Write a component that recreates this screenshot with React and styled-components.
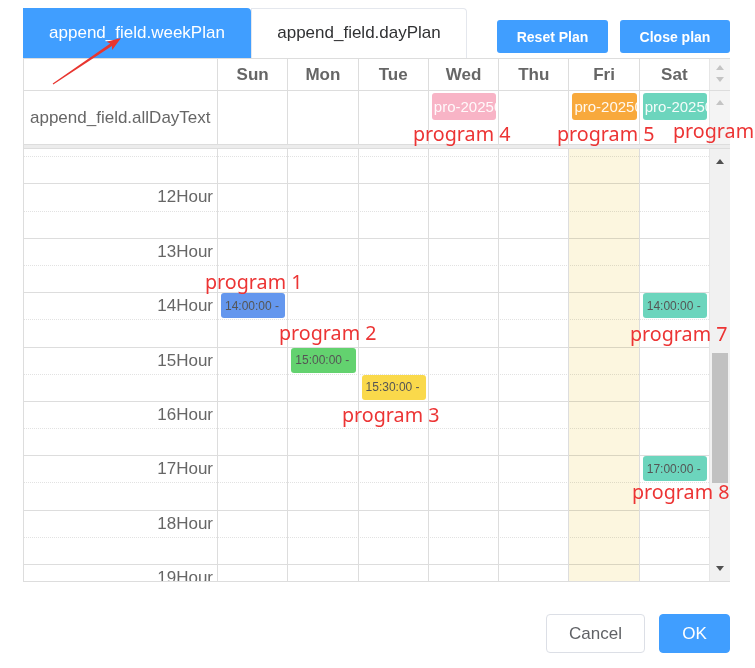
import React from 'react'
import styled, { createGlobalStyle } from 'styled-components';

const GlobalStyle = createGlobalStyle`
    body {
        margin: 0;
        background: #fff;
        font-family: "Liberation Sans", Arial, sans-serif;
    }
`

const SLOT = 27.2;
const START_HOUR = 11;
const SCROLL_OFFSET = 20;

const Page = styled.div`
    position: relative;
    width: 755px;
    height: 668px;
    overflow: hidden;
    box-sizing: border-box;
    padding: 8px 25px 0 23px;
    display: flex;
    flex-direction: column;
`

const TopBar = styled.div`
    display: flex;
    justify-content: space-between;
    height: 50px;
`

const Tabs = styled.div`
    display: flex;
`

const Tab = styled.div`
    height: 50px;
    width: ${p => p.$active ? 228 : 216}px;
    box-sizing: border-box;
    display: flex;
    align-items: center;
    justify-content: center;
    padding-bottom: 1px;
    font-size: 17px;
    color: ${p => p.$active ? '#fff' : '#303133'};
    background: ${p => p.$active ? '#409eff' : '#fff'};
    border: ${p => p.$active ? 'none' : '1px solid #e4e7ed'};
    border-bottom: none;
    border-radius: 0 4px 0 0;
`

const Actions = styled.div`
    display: flex;
    gap: 12px;
    padding-top: 12px;
`

const PlanButton = styled.button`
    width: ${p => p.$w}px;
    height: 33px;
    border: none;
    border-radius: 3px;
    background: #409eff;
    color: #fff;
    font-family: inherit;
    font-weight: bold;
    font-size: 14px;
    padding: 0;
`

const Calendar = styled.div`
    width: 707px;
    height: 524px;
    box-sizing: border-box;
    border: 1px solid #ddd;
    border-right: none;
    display: flex;
    flex-direction: column;
`

const Row = styled.div`
    display: grid;
    grid-template-columns: 193px repeat(7, minmax(0, 1fr)) 21px;
    height: ${p => p.$h}px;
    border-bottom: 1px solid #ddd;
    box-sizing: border-box;
`

const DayHead = styled.div`
    border-left: 1px solid #ddd;
    display: flex;
    align-items: center;
    justify-content: center;
    font-weight: bold;
    font-size: 17px;
    color: #666;
`

const AllDayLabel = styled.div`
    display: flex;
    align-items: center;
    padding-left: 6px;
    padding-top: 1px;
    font-size: 17px;
    color: #666;
`

const AllDayCell = styled.div`
    border-left: 1px solid #ddd;
    padding: 2px 2px 0 3px;
    min-width: 0;
    overflow: hidden;
`

const AllDayEvent = styled.div`
    height: 27px;
    border-radius: 3px;
    background: ${p => p.$color};
    color: rgba(255, 255, 255, 0.92);
    font-size: 15px;
    line-height: 27px;
    padding-left: 2px;
    white-space: nowrap;
    overflow: hidden;
`

const ScrollGutter = styled.div`
    background: #f4f4f4;
    border-left: 1px solid #e6e6e6;
    display: flex;
    flex-direction: column;
    align-items: center;
    gap: ${p => p.$gap || 0}px;
    padding-top: ${p => p.$top || 0}px;
`

const Arrow = styled.div`
    width: 0;
    height: 0;
    border-left: 4.5px solid transparent;
    border-right: 4.5px solid transparent;
    ${p => p.$down
        ? `border-top: 5px solid ${p.$color};`
        : `border-bottom: 5px solid ${p.$color};`}
`

const Divider = styled.div`
    height: 3px;
    background: #ececec;
    border-bottom: 1px solid #ddd;
`

const Body = styled.div`
    flex: 1;
    display: flex;
    min-height: 0;
`

const Viewport = styled.div`
    flex: 1;
    overflow: hidden;
`

const Content = styled.div`
    position: relative;
    margin-top: -${SCROLL_OFFSET}px;
`

const Slat = styled.div`
    display: grid;
    grid-template-columns: 193px 1fr;
    height: ${SLOT}px;
    box-sizing: border-box;
    border-top: 1px ${p => p.$half ? 'dotted #e2e2e2' : 'solid #ddd'};
`

const HourLabel = styled.div`
    text-align: right;
    padding-right: 4px;
    font-size: 17px;
    line-height: ${SLOT - 1}px;
    color: #666;
`

const DayColumns = styled.div`
    position: absolute;
    top: 0;
    bottom: 0;
    left: 193px;
    right: 0;
    display: grid;
    grid-template-columns: repeat(7, minmax(0, 1fr));
`

const DayColumn = styled.div`
    position: relative;
    border-left: 1px solid #ddd;
    ${p => p.$today && `
        &::before {
            content: '';
            position: absolute;
            inset: 0;
            background: #fcf6df;
            mix-blend-mode: multiply;
        }
    `}
`

const TimedEvent = styled.div`
    position: absolute;
    left: 3px;
    right: 2px;
    top: ${p => p.$top}px;
    height: 25px;
    border-radius: 3px;
    background: ${p => p.$color};
    color: #555;
    font-size: 12px;
    padding-left: 4px;
    display: flex;
    align-items: center;
    white-space: nowrap;
    overflow: hidden;
`

const Scrollbar = styled.div`
    width: 21px;
    background: #f1f1f1;
    border-left: 1px solid #e6e6e6;
    display: flex;
    flex-direction: column;
    align-items: center;
    padding: 10px 0 10px;
    box-sizing: border-box;
`

const Thumb = styled.div`
    width: 16px;
    height: 130px;
    margin-top: 189px;
    margin-bottom: auto;
    background: #c1c1c1;
`

const Footer = styled.div`
    display: flex;
    justify-content: flex-end;
    gap: 14px;
    margin-top: 32px;
`

const DialogButton = styled.button`
    height: 39px;
    width: ${p => p.$w}px;
    box-sizing: border-box;
    border-radius: 4px;
    font-family: inherit;
    font-size: 17px;
    padding: 0;
    border: 1px solid ${p => p.$primary ? '#409eff' : '#dcdfe6'};
    background: ${p => p.$primary ? '#409eff' : '#fff'};
    color: ${p => p.$primary ? '#fff' : '#606266'};
`

const Notes = styled.div`
    position: absolute;
    inset: 0;
    pointer-events: none;
`

const Note = styled.span`
    position: absolute;
    left: ${p => p.$x}px;
    top: ${p => p.$y - 13}px;
    font-family: "Noto Sans", "Noto Sans CJK SC", sans-serif;
    font-size: 19.7px;
    line-height: 26px;
    color: #ec3434;
    white-space: nowrap;
`

const PointerArrow = styled.svg`
    position: absolute;
    left: 0;
    top: 0;
`

const days = ['Sun', 'Mon', 'Tue', 'Wed', 'Thu', 'Fri', 'Sat'];

const allDay = {
    3: '#f8b4c6',
    5: '#f8a93c',
    6: '#6cd5bd',
};

const timed = [
    { day: 0, hour: 14, color: '#6497ee', text: '14:00:00 -' },
    { day: 1, hour: 15, color: '#63d26f', text: '15:00:00 -' },
    { day: 2, hour: 15.5, color: '#fad94b', text: '15:30:00 -' },
    { day: 6, hour: 14, color: '#6cd5bd', text: '14:00:00 -' },
    { day: 6, hour: 17, color: '#6cd5bd', text: '17:00:00 -' },
];

const notes = [
    { x: 205, y: 282, text: 'program 1' },
    { x: 279, y: 333, text: 'program 2' },
    { x: 342, y: 415, text: 'program 3' },
    { x: 413, y: 134, text: 'program 4' },
    { x: 557, y: 134, text: 'program 5' },
    { x: 673, y: 131, text: 'program' },
    { x: 630, y: 334, text: 'program 7' },
    { x: 632, y: 492, text: 'program 8' },
];

const slats = [];
for (let h = START_HOUR; h < 20; h++) {
    slats.push({ hour: h, half: false });
    slats.push({ hour: h, half: true });
}

export default function App() {
    return (
        <Page>
            <GlobalStyle />
            <TopBar>
                <Tabs>
                    <Tab $active>append_field.weekPlan</Tab>
                    <Tab>append_field.dayPlan</Tab>
                </Tabs>
                <Actions>
                    <PlanButton $w={111}>Reset Plan</PlanButton>
                    <PlanButton $w={110}>Close plan</PlanButton>
                </Actions>
            </TopBar>

            <Calendar>
                <Row $h={32}>
                    <div />
                    {days.map(d => <DayHead key={d}>{d}</DayHead>)}
                    <ScrollGutter $top={6} $gap={7}>
                        <Arrow $color="#c4c4c4" />
                        <Arrow $down $color="#c4c4c4" />
                    </ScrollGutter>
                </Row>
                <Row $h={54}>
                    <AllDayLabel>append_field.allDayText</AllDayLabel>
                    {days.map((d, i) => (
                        <AllDayCell key={d}>
                            {allDay[i] && <AllDayEvent $color={allDay[i]}>pro-20250101</AllDayEvent>}
                        </AllDayCell>
                    ))}
                    <ScrollGutter $top={9}>
                        <Arrow $color="#c4c4c4" />
                    </ScrollGutter>
                </Row>
                <Divider />
                <Body>
                    <Viewport>
                        <Content>
                            {slats.map((s, i) => (
                                <Slat key={i} $half={s.half}>
                                    <HourLabel>{s.half || s.hour < 12 ? '' : `${s.hour}Hour`}</HourLabel>
                                </Slat>
                            ))}
                            <DayColumns>
                                {days.map((d, i) => (
                                    <DayColumn key={d} $today={i === 5}>
                                        {timed.filter(e => e.day === i).map(e => (
                                            <TimedEvent
                                                key={e.hour}
                                                $color={e.color}
                                                $top={(e.hour - START_HOUR) * SLOT * 2 + 1}
                                            >
                                                {e.text}
                                            </TimedEvent>
                                        ))}
                                    </DayColumn>
                                ))}
                            </DayColumns>
                        </Content>
                    </Viewport>
                    <Scrollbar>
                        <Arrow $color="#505050" />
                        <Thumb />
                        <Arrow $down $color="#505050" />
                    </Scrollbar>
                </Body>
            </Calendar>

            <Footer>
                <DialogButton $w={99}>Cancel</DialogButton>
                <DialogButton $w={71} $primary>OK</DialogButton>
            </Footer>

            <Notes>
                {notes.map(n => <Note key={n.text + n.x} $x={n.x} $y={n.y}>{n.text}</Note>)}
                <PointerArrow width="755" height="668">
                    <polygon
                        fill="#e8352f"
                        points="52.7,83.6 110.3,43.5 106.6,41.7 121,38 112.2,50 111.9,45.9 53.3,84.4"
                    />
                </PointerArrow>
            </Notes>
        </Page>
    );
}
